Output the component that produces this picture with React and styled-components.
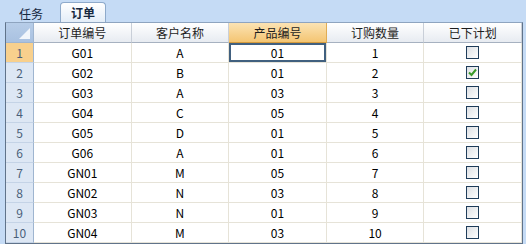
import React, { useState } from 'react';
import styled, { createGlobalStyle } from 'styled-components';

const GlobalStyle = createGlobalStyle`
  html, body {
    margin: 0;
    padding: 0;
    background: #c5dbf5;
    font-family: "Noto Sans CJK SC", "Liberation Sans", sans-serif;
    font-size: 12px;
    color: #000;
  }
`;

const rows = [
  { code: 'G01', customer: 'A', product: '01', qty: 1, planned: false },
  { code: 'G02', customer: 'B', product: '01', qty: 2, planned: true },
  { code: 'G03', customer: 'A', product: '03', qty: 3, planned: false },
  { code: 'G04', customer: 'C', product: '05', qty: 4, planned: false },
  { code: 'G05', customer: 'D', product: '01', qty: 5, planned: false },
  { code: 'G06', customer: 'A', product: '01', qty: 6, planned: false },
  { code: 'GN01', customer: 'M', product: '05', qty: 7, planned: false },
  { code: 'GN02', customer: 'N', product: '03', qty: 8, planned: false },
  { code: 'GN03', customer: 'N', product: '01', qty: 9, planned: false },
  { code: 'GN04', customer: 'M', product: '03', qty: 10, planned: false },
];

const columns = ['订单编号', '客户名称', '产品编号', '订购数量', '已下计划'];

const App = () => {
  const [tab, setTab] = useState('订单');
  const [active] = useState({ row: 0, col: 2 });

  return (
    <Page>
      <GlobalStyle />
      <TabStrip>
        {['任务', '订单'].map((t) => (
          <Tab key={t} active={t === tab} onClick={() => setTab(t)}>
            {t}
          </Tab>
        ))}
      </TabStrip>
      <Grid>
        <Corner>
          <CornerMark />
        </Corner>
        {columns.map((c, i) => (
          <HeadCell key={c} selected={i === active.col}>
            {c}
          </HeadCell>
        ))}
        {rows.map((r, ri) => (
          <React.Fragment key={r.code}>
            <RowHead selected={ri === active.row}>{ri + 1}</RowHead>
            {[r.code, r.customer, r.product, r.qty].map((v, ci) => (
              <Cell key={ci} focused={ri === active.row && ci === active.col}>
                {v}
              </Cell>
            ))}
            <Cell>
              <Check>
                {r.planned && (
                  <svg width="11" height="11" viewBox="0 0 11 11">
                    <path d="M2 5.5 L4.5 8 L9 2.5" fill="none" stroke="#3a9a2a" strokeWidth="2" />
                  </svg>
                )}
              </Check>
            </Cell>
          </React.Fragment>
        ))}
      </Grid>
    </Page>
  );
};

export default App;

const Page = styled.div`
  width: 526px;
  height: 244px;
  display: flex;
  flex-direction: column;
  overflow: hidden;
`;

const TabStrip = styled.div`
  height: 22px;
  display: flex;
  align-items: flex-end;
  padding-left: 14px;
  gap: 12px;
  box-sizing: border-box;
`;

const Tab = styled.div`
  height: ${(p) => (p.active ? '20px' : '18px')};
  padding: 0 ${(p) => (p.active ? '10px' : '4px')};
  display: flex;
  align-items: center;
  font-weight: ${(p) => (p.active ? 'bold' : 'normal')};
  color: #15283f;
  cursor: pointer;
  border-radius: 4px 4px 0 0;
  border: ${(p) => (p.active ? '1px solid #8eaacb' : '1px solid transparent')};
  border-bottom: none;
  background: ${(p) =>
    p.active ? 'linear-gradient(#ffffff, #e3edf8)' : 'transparent'};
  box-sizing: border-box;
`;

const Grid = styled.div`
  margin-left: 5px;
  width: 518px;
  display: grid;
  grid-template-columns: 28px repeat(5, 1fr);
  grid-template-rows: 20px;
  grid-auto-rows: 20px;
  border: 1px solid #60738a;
  border-top-color: #8ea4bf;
  background: #fff;
  box-sizing: border-box;
`;

const Corner = styled.div`
  background: linear-gradient(#b7cde8, #a9c1e0);
  border-right: 1px solid #9fb5d0;
  border-bottom: 1px solid #9fb5d0;
  position: relative;
`;

const CornerMark = styled.div`
  position: absolute;
  right: 3px;
  bottom: 3px;
  width: 0;
  height: 0;
  border-left: 11px solid transparent;
  border-bottom: 11px solid #f2f6fb;
`;

const HeadCell = styled.div`
  display: flex;
  align-items: center;
  justify-content: center;
  background: ${(p) =>
    p.selected
      ? 'linear-gradient(#fbe3b4, #f4c572)'
      : 'linear-gradient(#ffffff, #e7ebf1)'};
  border-right: 1px solid ${(p) => (p.selected ? '#e0ad55' : '#c9cfd8')};
  border-bottom: 1px solid ${(p) => (p.selected ? '#d49a3c' : '#a6b1c0')};
  color: #1d1d1d;
`;

const RowHead = styled.div`
  display: flex;
  align-items: center;
  justify-content: center;
  background: ${(p) => (p.selected ? '#f8d08d' : '#dde7f4')};
  border-right: 1px solid #9fb5d0;
  border-bottom: 1px solid #c4d3e6;
  color: #4a5f79;
`;

const Cell = styled.div`
  display: flex;
  align-items: center;
  justify-content: center;
  border-right: 1px solid #e6e3d8;
  border-bottom: 1px solid #e6e3d8;
  box-shadow: ${(p) => (p.focused ? 'inset 0 0 0 2px #41607f' : 'none')};
`;

const Check = styled.div`
  width: 13px;
  height: 13px;
  box-sizing: border-box;
  border: 1px solid #1f3d5a;
  background: linear-gradient(135deg, #dcdfe3, #ffffff);
  display: flex;
  align-items: center;
  justify-content: center;
`;
